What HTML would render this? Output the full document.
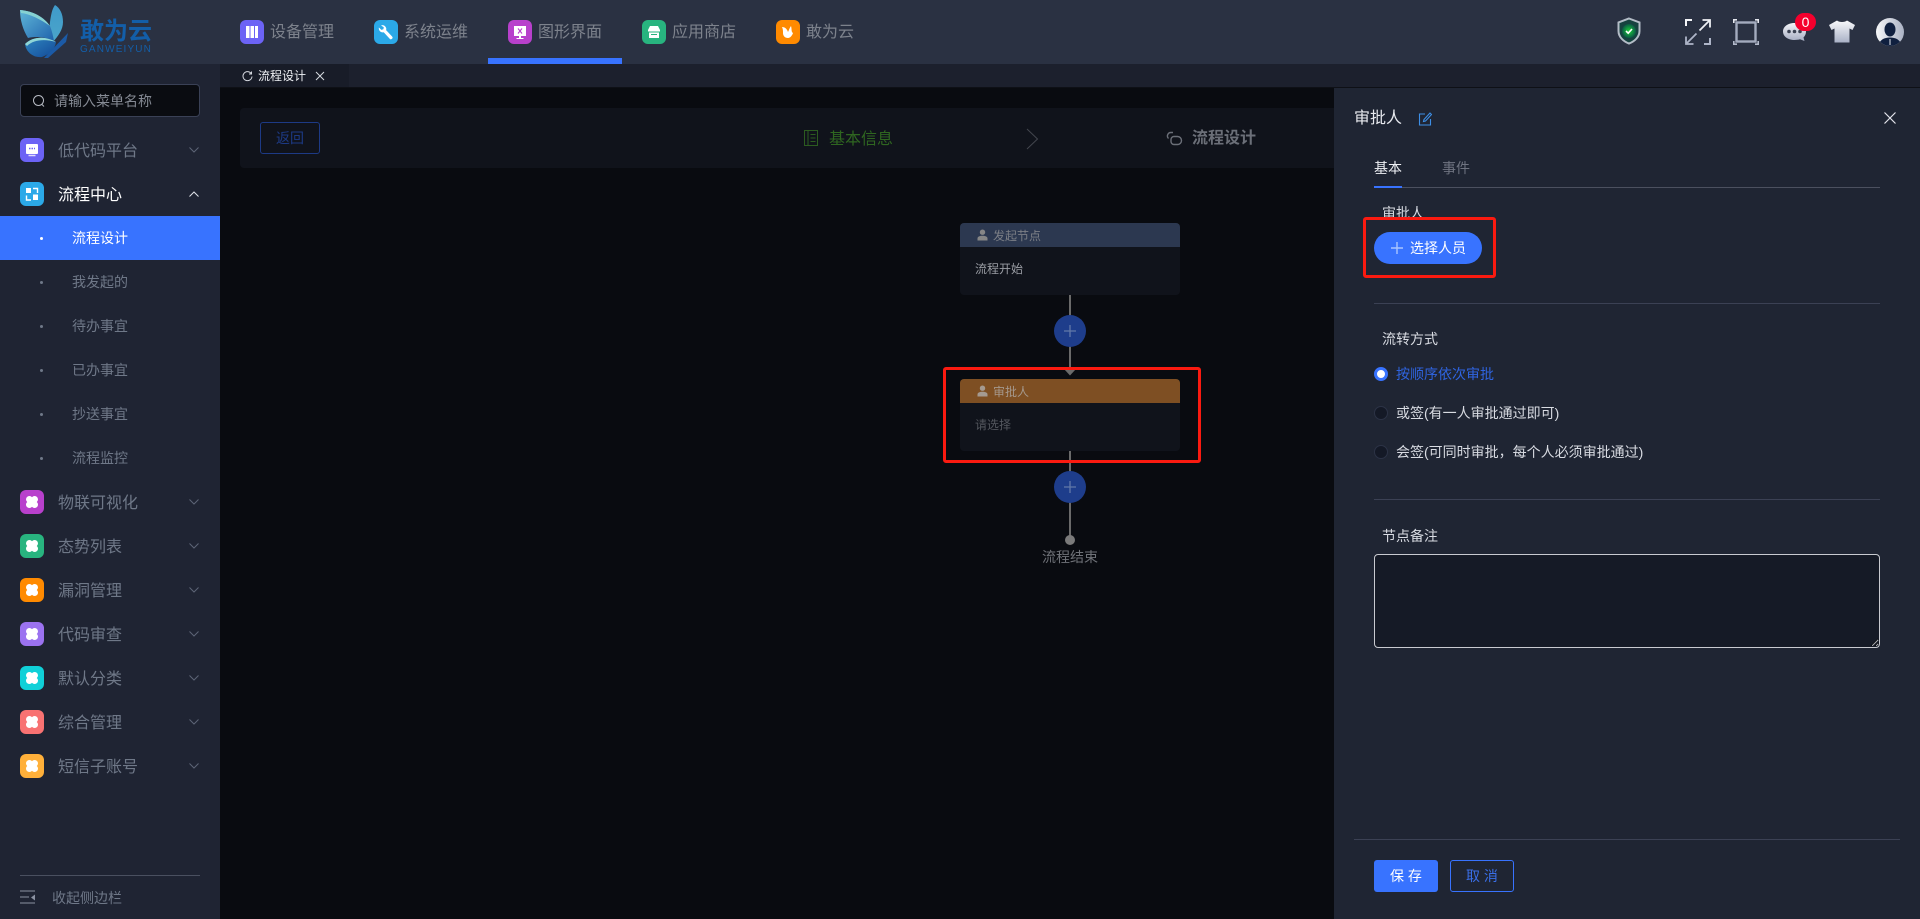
<!DOCTYPE html>
<html lang="zh-CN">
<head>
<meta charset="utf-8">
<title>流程设计</title>
<style>
*{box-sizing:border-box;margin:0;padding:0}
html,body{width:1920px;height:919px;overflow:hidden;background:#090b10;font-family:"Liberation Sans","Noto Sans CJK SC",sans-serif;}
.a{position:absolute}
.t{position:absolute;white-space:nowrap;line-height:20px;height:20px}
svg{position:absolute;display:block}
.ic{position:absolute;width:24px;border-radius:6px}
.nav{font-size:16px;color:#7d828c}
.side{font-size:16px;color:#6f7888}
.sub{font-size:14px;color:#6f7888}
.dot{position:absolute;left:40px;width:3px;height:3px;border-radius:50%;background:#6f7888}
.lab{font-size:14px;color:#d8dbe2}
</style>
</head>
<body>
<!-- top bar -->
<div class="a" style="left:0;top:0;width:1920px;height:64px;background:#2a3142"></div>
<div class="a" style="left:220px;top:64px;width:1700px;height:23px;background:#1c202d"></div>
<div class="a" style="left:220px;top:87px;width:1700px;height:1px;background:#0e1016"></div>
<div class="a" style="left:220px;top:64px;width:129px;height:23px;background:#181c28"></div>

<!-- logo -->
<svg style="left:16px;top:2px" width="56" height="60" viewBox="16 2 56 60">
<defs>
<linearGradient id="w1" x1="0" y1="0" x2="1" y2="1"><stop offset="0" stop-color="#5fb6d8"/><stop offset="1" stop-color="#1f62ac"/></linearGradient>
<linearGradient id="w2" x1="0" y1="0" x2="0" y2="1"><stop offset="0" stop-color="#3f9acb"/><stop offset="1" stop-color="#4ba5c9"/></linearGradient>
<linearGradient id="w3" x1="0" y1="0" x2="1" y2="1"><stop offset="0" stop-color="#2f86c0"/><stop offset="1" stop-color="#134a98"/></linearGradient>
</defs>
<path d="M55 5C60 8 63 14 63 22C63 30 58 36 53 42C51 34 49 28 50 22C51 15 52 9 55 5Z" fill="url(#w2)"/>
<path d="M20 10C33 11 44 17 50 26C52 31 53 36 54 41C46 37 36 36 28 38C23 30 20 20 20 10Z" fill="url(#w1)"/>
<path d="M20 10C33 11 44 17 50 26C40 19 30 14 21 13Z" fill="#86d2d2"/>
<path d="M25 44C33 36 46 36 56 42C55 49 50 54 42 57C33 58 26 52 25 44Z" fill="url(#w3)"/>
<path d="M25 44C33 36 46 36 56 42C46 39 34 39 27 46Z" fill="#8fd6d6"/>
<path d="M44 58L68 33L66 42L48 58Z" fill="#1b5aa6"/>
</svg>
<div class="t" style="left:80px;top:19px;font-size:24px;line-height:26px;height:26px;color:#135ea8;font-weight:700">敢为云</div>
<div class="t" style="left:80px;top:45px;font-size:10px;line-height:10px;height:10px;color:#135ea8;letter-spacing:1.15px">GANWEIYUN</div>

<!-- top nav -->
<div class="ic" style="left:240px;top:20px;height:24px;background:#6c63f5"></div>
<svg style="left:240px;top:20px" width="24" height="24"><path d="M6 6h3.500v12H6zM10.500 6H14v12h-3.500zM15 6h3v12h-3z" fill="#fff"/></svg>
<div class="t nav" style="left:270px;top:23px">设备管理</div>
<div class="ic" style="left:374px;top:20px;height:24px;background:#2ba9e8"></div>
<svg style="left:374px;top:20px" width="24" height="24"><path d="M7 5.500a4 4 0 0 1 4.500 1.200a3.800 3.800 0 0 1 .6 3.400l6 6.400a1.600 1.600 0 0 1-2.400 2.200l-6-6.400a4 4 0 0 1-4.800-4.800l2.500 2.400l2-.6l.4-2z" fill="#fff"/></svg>
<div class="t nav" style="left:404px;top:23px">系统运维</div>
<div class="ic" style="left:508px;top:20px;height:24px;background:#b840cc"></div>
<svg style="left:508px;top:20px" width="24" height="24"><path d="M6 6h12v10h-5v2h2.500v1h-7v-1H11v-2H6z" fill="#fff"/><path d="M10 8.500l4 5M14 8.500l-4 5" stroke="#b840cc" stroke-width="1.100"/></svg>
<div class="t nav" style="left:538px;top:23px">图形界面</div>
<div class="a" style="left:488px;top:58px;width:134px;height:6px;background:#3873ff"></div>
<div class="ic" style="left:642px;top:20px;height:24px;background:#28b47f"></div>
<svg style="left:642px;top:20px" width="24" height="24"><path d="M8 6h8l2 4v1.500H6V10zM7 12.500h10V18H7z" fill="#fff"/><path d="M9 14.500h6" stroke="#28b47f"/></svg>
<div class="t nav" style="left:672px;top:23px">应用商店</div>
<div class="ic" style="left:776px;top:20px;height:24px;background:#ff8a00"></div>
<svg style="left:776px;top:20px" width="24" height="24"><path d="M6 7c3 0 5 2 6 5c1-2 1.500-4 3-6c1 3 0 6 2 7c-1 3-3 5-5 5c-3 0-5-2-5-5c0-2 0-4-1-6z" fill="#fff"/></svg>
<div class="t nav" style="left:806px;top:23px">敢为云</div>

<!-- top right icons -->
<svg style="left:1617px;top:17px" width="24" height="28" viewBox="0 0 24 28">
<defs><radialGradient id="gs"><stop offset="0" stop-color="#1bd13a"/><stop offset="1" stop-color="#0a5a44"/></radialGradient></defs>
<path d="M12 1.500L22.500 5.500V14C22.500 20 17.500 24.500 12 26.500C6.500 24.500 1.500 20 1.500 14V5.500Z" fill="#16423f" stroke="#b3bcc6" stroke-width="2"/>
<circle cx="12" cy="14" r="7" fill="url(#gs)"/>
<path d="M9 14l2.200 2.200L15 12" fill="none" stroke="#fff" stroke-width="1.600"/>
</svg>
<svg style="left:1685px;top:19px" width="26" height="26" viewBox="0 0 26 26" fill="none">
<path d="M1 7V1H7" stroke="#f4f5f8" stroke-width="2"/>
<path d="M14.500 11.500L24 2M17.500 1H25V8.500" stroke="#eef0f4" stroke-width="1.800"/>
<path d="M11.500 14.500L2 24M1 17.500V25H8.500" stroke="#aeb5c8" stroke-width="1.800"/>
<path d="M25 19V25H19" stroke="#aeb5c8" stroke-width="2"/>
</svg>
<svg style="left:1733px;top:19px" width="26" height="26" viewBox="0 0 26 26" fill="none">
<rect x="3.500" y="3.500" width="19" height="19" stroke="#a3abbe" stroke-width="2.400"/>
<path d="M0.800 4V0.800H4M22 0.800H25.200V4" stroke="#e4e7ee" stroke-width="1.600"/>
<path d="M0.800 22V25.200H4M22 25.200H25.200V22" stroke="#b3bacb" stroke-width="1.600"/>
</svg>
<svg style="left:1783px;top:21px" width="23" height="23" viewBox="0 1.500 23 20">
<defs><linearGradient id="cg" x1="0" y1="0" x2="0" y2="1"><stop offset="0" stop-color="#f4f5f8"/><stop offset="1" stop-color="#a6adc2"/></linearGradient></defs>
<path d="M11.500 2C18 2 23 5.500 23 10.500C23 13 22 15 20.500 16.500L21.500 20L17 18.300C15.500 18.800 13.500 19 11.500 19C5 19 0 15.500 0 10.500C0 5.500 5 2 11.500 2Z" fill="url(#cg)"/>
<circle cx="6" cy="10.500" r="1.800" fill="#3a4152"/><circle cx="11.500" cy="10.500" r="1.800" fill="#3a4152"/><circle cx="17" cy="10.500" r="1.800" fill="#3a4152"/>
</svg>
<div class="a" style="left:1795px;top:13px;width:21px;height:18px;border-radius:9px;background:#f5002d;color:#fff;font-size:14px;line-height:18px;text-align:center">0</div>
<svg style="left:1829px;top:19px" width="26" height="24" viewBox="0 0 26 24">
<defs><linearGradient id="sg" x1="0" y1="0" x2="0" y2="1"><stop offset="0" stop-color="#f8f9fb"/><stop offset="1" stop-color="#a9b1c6"/></linearGradient></defs>
<path d="M8 1.500C10 3.500 16 3.500 18 1.500L26 6L23.500 11L20.500 9.500V23.500H5.500V9.500L2.500 11L0 6Z" fill="url(#sg)"/>
</svg>
<svg style="left:1876px;top:18px" width="28" height="28" viewBox="0 0 28 28">
<defs><linearGradient id="ag" x1="0" y1="0" x2="1" y2="0"><stop offset="0" stop-color="#f6f7f9"/><stop offset="1" stop-color="#aab2c4"/></linearGradient><clipPath id="ac"><circle cx="14" cy="14" r="14"/></clipPath></defs>
<circle cx="14" cy="14" r="14" fill="url(#ag)"/>
<g clip-path="url(#ac)" fill="#10203f">
<ellipse cx="14" cy="11.500" rx="5.500" ry="7"/>
<path d="M2 29C3 22 8 19.500 14 19.500C20 19.500 25 22 26 29Z"/>
</g>
<path d="M14 21v6" stroke="#e4e7ee" stroke-width="1"/>
</svg>

<!-- sidebar -->
<div class="a" style="left:0;top:64px;width:220px;height:855px;background:#1f2433"></div>
<div class="a" style="left:20px;top:84px;width:180px;height:33px;background:#0a0c11;border:1px solid #3a4156;border-radius:4px"></div>
<svg style="left:32px;top:94px" width="14" height="14" viewBox="0 0 14 14" fill="none"><circle cx="6.500" cy="6.500" r="5" stroke="#b8bcc4" stroke-width="1"/><path d="M10 10.500l2 2" stroke="#b8bcc4" stroke-width="1"/></svg>
<div class="t" style="left:54px;top:91px;font-size:14px;color:#858a94">请输入菜单名称</div>

<!-- sidebar items -->
<div class="ic" style="left:20px;top:138px;height:24px;background:#6c63f5"></div>
<svg style="left:20px;top:138px" width="24" height="24"><path d="M7 6h10a1 1 0 0 1 1 1v8a1 1 0 0 1-1 1H7a1 1 0 0 1-1-1V7a1 1 0 0 1 1-1z" fill="#fff"/><path d="M8.500 17.500h7" stroke="#e0dcff" stroke-width="1.500"/><path d="M9 10.500h6" stroke="#6c63f5" stroke-width="1.500" stroke-dasharray="1.500 1"/></svg>
<div class="t side" style="left:58px;top:142px">低代码平台</div>
<svg style="left:188px;top:146px" width="12" height="8" fill="none"><path d="M1.500 1.500L6 6l4.500-4.500" stroke="#5d6577" stroke-width="1"/></svg>

<div class="ic" style="left:20px;top:182px;height:24px;background:#2ba9e8"></div>
<svg style="left:20px;top:182px" width="24" height="24"><path d="M6 6h5v5H6zM13 12.500h5V18h-5z" fill="#fff"/><path d="M13 6.500h4.500V11M11 18H6.500v-4.500" fill="none" stroke="#fff" stroke-width="1.400"/></svg>
<div class="t side" style="left:58px;top:186px;color:#fff">流程中心</div>
<svg style="left:188px;top:190px" width="12" height="8" fill="none"><path d="M1.500 6.500L6 2l4.500 4.500" stroke="#e0e3ea" stroke-width="1"/></svg>

<div class="a" style="left:0;top:216px;width:220px;height:44px;background:#3873ff"></div>
<div class="dot" style="top:237px;background:#fff"></div>
<div class="t sub" style="left:72px;top:228px;color:#fff">流程设计</div>
<div class="dot" style="top:281px"></div>
<div class="t sub" style="left:72px;top:272px">我发起的</div>
<div class="dot" style="top:325px"></div>
<div class="t sub" style="left:72px;top:316px">待办事宜</div>
<div class="dot" style="top:369px"></div>
<div class="t sub" style="left:72px;top:360px">已办事宜</div>
<div class="dot" style="top:413px"></div>
<div class="t sub" style="left:72px;top:404px">抄送事宜</div>
<div class="dot" style="top:457px"></div>
<div class="t sub" style="left:72px;top:448px">流程监控</div>

<svg width="0" height="0" style="position:absolute"><defs>
<g id="clover" fill="#fff"><circle cx="9.400" cy="9.400" r="3.400"/><circle cx="14.600" cy="9.400" r="3.400"/><circle cx="9.400" cy="14.600" r="3.400"/><circle cx="14.600" cy="14.600" r="3.400"/><rect x="9.400" y="9.400" width="5.200" height="5.200"/></g>
<path id="chev" d="M1.500 1.500L6 6l4.500-4.500" fill="none" stroke="#5d6577" stroke-width="1"/>
</defs></svg>

<div class="ic" style="left:20px;top:490px;height:24px;background:#b840cc"></div>
<svg style="left:20px;top:490px" width="24" height="24"><use href="#clover"/></svg>
<div class="t side" style="left:58px;top:494px">物联可视化</div>
<svg style="left:188px;top:498px" width="12" height="8"><use href="#chev"/></svg>

<div class="ic" style="left:20px;top:534px;height:24px;background:#28b47f"></div>
<svg style="left:20px;top:534px" width="24" height="24"><use href="#clover"/></svg>
<div class="t side" style="left:58px;top:538px">态势列表</div>
<svg style="left:188px;top:542px" width="12" height="8"><use href="#chev"/></svg>

<div class="ic" style="left:20px;top:578px;height:24px;background:#ff8a00"></div>
<svg style="left:20px;top:578px" width="24" height="24"><use href="#clover"/></svg>
<div class="t side" style="left:58px;top:582px">漏洞管理</div>
<svg style="left:188px;top:586px" width="12" height="8"><use href="#chev"/></svg>

<div class="ic" style="left:20px;top:622px;height:24px;background:#9b72f0"></div>
<svg style="left:20px;top:622px" width="24" height="24"><use href="#clover"/></svg>
<div class="t side" style="left:58px;top:626px">代码审查</div>
<svg style="left:188px;top:630px" width="12" height="8"><use href="#chev"/></svg>

<div class="ic" style="left:20px;top:666px;height:24px;background:#10d0d8"></div>
<svg style="left:20px;top:666px" width="24" height="24"><use href="#clover"/></svg>
<div class="t side" style="left:58px;top:670px">默认分类</div>
<svg style="left:188px;top:674px" width="12" height="8"><use href="#chev"/></svg>

<div class="ic" style="left:20px;top:710px;height:24px;background:#f87272"></div>
<svg style="left:20px;top:710px" width="24" height="24"><use href="#clover"/></svg>
<div class="t side" style="left:58px;top:714px">综合管理</div>
<svg style="left:188px;top:718px" width="12" height="8"><use href="#chev"/></svg>

<div class="ic" style="left:20px;top:754px;height:24px;background:#ffb03a"></div>
<svg style="left:20px;top:754px" width="24" height="24"><use href="#clover"/></svg>
<div class="t side" style="left:58px;top:758px">短信子账号</div>
<svg style="left:188px;top:762px" width="12" height="8"><use href="#chev"/></svg>

<div class="a" style="left:20px;top:875px;width:180px;height:1px;background:#4a5060"></div>
<svg style="left:20px;top:890px" width="16" height="16" fill="none"><path d="M0 1h15M0 7h9M0 13h15" stroke="#8b92a2" stroke-width="1"/><path d="M15 4.500v6L11 7.500z" fill="#8b92a2"/></svg>
<div class="t" style="left:52px;top:888px;font-size:14px;color:#6f7888">收起侧边栏</div>

<!-- tab -->
<svg style="left:242px;top:71px" width="11" height="11" viewBox="0 0 11 11" fill="none"><path d="M9 2.300A4.500 4.500 0 1 0 10 5.500" stroke="#d6d9e0" stroke-width="1"/><path d="M9.500 0.500V3H7" stroke="#d6d9e0" stroke-width="1"/></svg>
<div class="t" style="left:258px;top:66px;font-size:12px;color:#eef0f4">流程设计</div>
<svg style="left:315px;top:71px" width="10" height="10" fill="none"><path d="M1 1l8 8M9 1l-8 8" stroke="#d6d9e0" stroke-width="1"/></svg>

<!-- content header -->
<div class="a" style="left:240px;top:108px;width:1094px;height:60px;background:#10131b;border-radius:4px 0 0 4px"></div>
<div class="a" style="left:260px;top:122px;width:60px;height:32px;border:1px solid #1d3a85;border-radius:3px;color:#1d3a85;font-size:14px;line-height:30px;text-align:center">返回</div>
<svg style="left:804px;top:130px" width="15" height="17" fill="none"><rect x="0.500" y="0.500" width="13" height="15" stroke="#2c5c20"/><path d="M4 1v14M6.500 4.500h5M6.500 8h5M6.500 11.500h5" stroke="#2c5c20"/></svg>
<div class="t" style="left:829px;top:130px;font-size:16px;color:#2f6620">基本信息</div>
<svg style="left:1026px;top:128px" width="13" height="22" fill="none"><path d="M1 1l10.500 10L1 21" stroke="#43464e" stroke-width="1"/></svg>
<svg style="left:1166px;top:131px" width="17" height="16" fill="none"><path d="M7 1.500H5a3.500 3.500 0 0 0-2.500 6" stroke="#6b6f78" stroke-width="1.400"/><path d="M5 8.500A3 3 0 0 1 8 5.500h3.500a4 4 0 0 1 0 8H8a3 3 0 0 1-3-3z" stroke="#6b6f78" stroke-width="1.400"/></svg>
<div class="t" style="left:1192px;top:129px;font-size:16px;font-weight:700;color:#6b6f78">流程设计</div>

<!-- flow -->
<div class="a" style="left:1069px;top:295px;width:2px;height:78px;background:#6a6a6a"></div>
<div class="a" style="left:1069px;top:451px;width:2px;height:86px;background:#6a6a6a"></div>
<svg style="left:1064px;top:369px" width="12" height="7"><path d="M0 0h12L6 6.500z" fill="#6a6a6a"/></svg>

<div class="a" style="left:960px;top:223px;width:220px;height:72px;background:#10131b;border-radius:4px;overflow:hidden">
  <div style="height:24px;background:#2c3850"></div>
</div>
<svg style="left:977px;top:229px" width="11" height="12"><circle cx="5.500" cy="3.200" r="2.700" fill="#868686"/><path d="M0.500 11.500V9.500C0.500 7.500 3 6.800 5.500 6.800S10.500 7.500 10.500 9.500V11.500Z" fill="#868686"/></svg>
<div class="t" style="left:993px;top:226px;font-size:12px;color:#7c7f86">发起节点</div>
<div class="t" style="left:975px;top:259px;font-size:12px;color:#9a9da4">流程开始</div>

<div class="a" style="left:1054px;top:315px;width:32px;height:32px;border-radius:50%;background:#1e3d8b"></div>
<svg style="left:1064px;top:325px" width="12" height="12"><path d="M6 0v12M0 6h12" stroke="#6178a8" stroke-width="1.300"/></svg>

<div class="a" style="left:960px;top:379px;width:220px;height:72px;background:#10131b;border-radius:4px;overflow:hidden">
  <div style="height:24px;background:#7e4f23"></div>
</div>
<svg style="left:977px;top:385px" width="11" height="12"><circle cx="5.500" cy="3.200" r="2.700" fill="#a59a90"/><path d="M0.500 11.500V9.500C0.500 7.500 3 6.800 5.500 6.800S10.500 7.500 10.500 9.500V11.500Z" fill="#a59a90"/></svg>
<div class="t" style="left:993px;top:382px;font-size:12px;color:#a5988c">审批人</div>
<div class="t" style="left:975px;top:415px;font-size:12px;color:#54575e">请选择</div>

<div class="a" style="left:1054px;top:471px;width:32px;height:32px;border-radius:50%;background:#1e3d8b"></div>
<svg style="left:1064px;top:481px" width="12" height="12"><path d="M6 0v12M0 6h12" stroke="#6178a8" stroke-width="1.300"/></svg>

<div class="a" style="left:1065px;top:535px;width:10px;height:10px;border-radius:50%;background:#7a7a7a"></div>
<div class="t" style="left:1042px;top:547px;font-size:14px;color:#6f7278">流程结束</div>

<div class="a" style="left:943px;top:367px;width:258px;height:96px;border:3px solid #fa1a10;border-radius:3px"></div>

<!-- right panel -->
<div class="a" style="left:1334px;top:88px;width:586px;height:831px;background:#1f2533"></div>
<div class="t" style="left:1354px;top:109px;font-size:16px;color:#e8eaef">审批人</div>
<svg style="left:1418px;top:112px" width="14" height="14" fill="none"><path d="M7 2H1.500V13H12.500V7" stroke="#3d8fe6" stroke-width="1.100"/><path d="M12 1L6 7.500L5.500 9.500L7.500 9L13.500 2.500Z" stroke="#3d8fe6" stroke-width="1.100"/></svg>
<svg style="left:1884px;top:112px" width="12" height="12" fill="none"><path d="M0.500 0.500l11 11M11.500 0.500l-11 11" stroke="#e4e6ec" stroke-width="1.200"/></svg>

<div class="t" style="left:1374px;top:158px;font-size:14px;color:#eef0f4">基本</div>
<div class="t" style="left:1442px;top:158px;font-size:14px;color:#6f7481">事件</div>
<div class="a" style="left:1374px;top:187px;width:506px;height:1px;background:#4b505f"></div>
<div class="a" style="left:1374px;top:186px;width:28px;height:2px;background:#3873ff"></div>

<div class="t lab" style="left:1382px;top:203px;font-size:14px">审批人</div>
<div class="a" style="left:1374px;top:232px;width:108px;height:32px;border-radius:16px;background:#3873ff"></div>
<svg style="left:1391px;top:242px" width="12" height="12"><path d="M6 0v12M0 6h12" stroke="#a9c4ff" stroke-width="1.400"/></svg>
<div class="t" style="left:1410px;top:238px;font-size:14px;color:#fff">选择人员</div>
<div class="a" style="left:1363px;top:217px;width:133px;height:61px;border:3px solid #fa1a10;border-radius:3px"></div>

<div class="a" style="left:1374px;top:303px;width:506px;height:1px;background:#3b4154"></div>
<div class="t lab" style="left:1382px;top:329px">流转方式</div>

<div class="a" style="left:1374px;top:367px;width:14px;height:14px;border-radius:50%;background:#fff;border:3px solid #3873ff"></div>
<div class="t" style="left:1396px;top:364px;font-size:14px;color:#2f64e0">按顺序依次审批</div>
<div class="a" style="left:1374px;top:406px;width:14px;height:14px;border-radius:50%;background:#141926;border:1px solid #2c3346"></div>
<div class="t lab" style="left:1396px;top:403px">或签(有一人审批通过即可)</div>
<div class="a" style="left:1374px;top:445px;width:14px;height:14px;border-radius:50%;background:#141926;border:1px solid #2c3346"></div>
<div class="t lab" style="left:1396px;top:442px">会签(可同时审批，每个人必须审批通过)</div>

<div class="a" style="left:1374px;top:499px;width:506px;height:1px;background:#3b4154"></div>
<div class="t lab" style="left:1382px;top:526px">节点备注</div>
<textarea class="a" style="left:1374px;top:554px;width:506px;height:94px;background:#151a26;border:1px solid #c8cad0;border-radius:4px;outline:none"></textarea>

<div class="a" style="left:1354px;top:839px;width:546px;height:1px;background:#3b4154"></div>
<div class="a" style="left:1374px;top:860px;width:64px;height:32px;background:#3873ff;border-radius:3px;color:#fff;font-size:14px;line-height:32px;text-align:center">保 存</div>
<div class="a" style="left:1450px;top:860px;width:64px;height:32px;border:1px solid #3873ff;border-radius:3px;color:#3a6fe8;font-size:14px;line-height:30px;text-align:center">取 消</div>
</body>
</html>
